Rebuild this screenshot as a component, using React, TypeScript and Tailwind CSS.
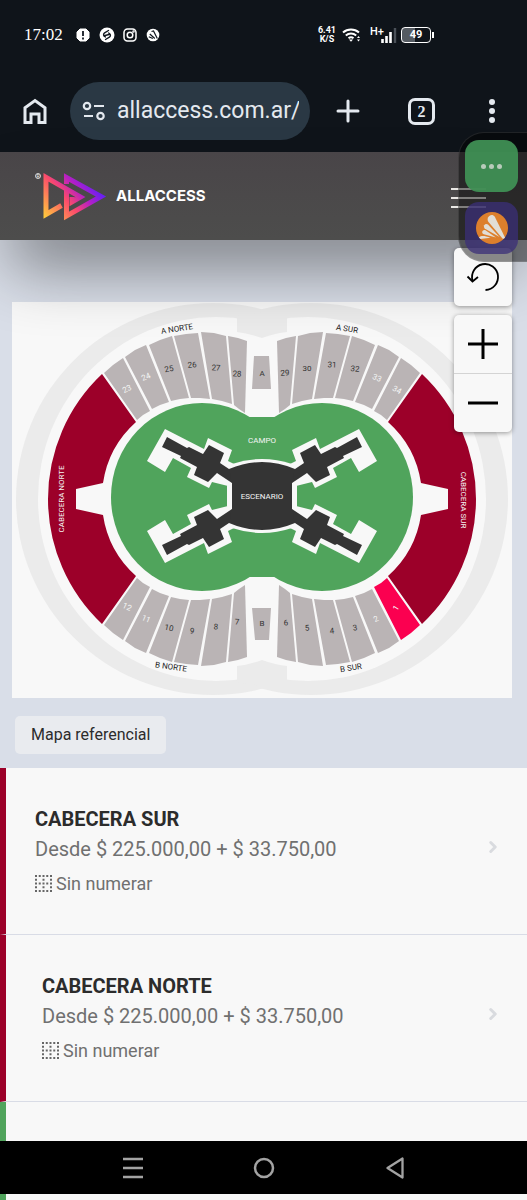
import { ChevronRight } from "lucide-react";

const blocks = [
  "104,373 113,365 123,358 150,411 143,415 137,420",
  "125,357 135,350 146,345 169,402 160,405 152,409",
  "149,345 160,340 172,336 189,398 180,399 171,401",
  "174,336 186,334 198,333 210,399 200,398 191,398",
  "201,332 214,333 226,336 232,404 222,401 212,399",
  "228,336 238,338 247,341 245,413 239,409 234,405",
];

const labels = [
  { text: "23", x: 127, y: 389, r: -25, light: true },
  { text: "24", x: 146, y: 377, r: -22, light: true },
  { text: "25", x: 169, y: 369, r: -10 },
  { text: "26", x: 192, y: 365, r: -3 },
  { text: "27", x: 216, y: 368, r: 3 },
  { text: "28", x: 237, y: 374, r: 3 },
  { text: "A", x: 262, y: 373, r: 0 },
  { text: "29", x: 285, y: 373, r: -2 },
  { text: "30", x: 307, y: 368, r: 0 },
  { text: "31", x: 332, y: 365, r: 2 },
  { text: "32", x: 355, y: 369, r: 6 },
  { text: "33", x: 377, y: 378, r: 24, light: true },
  { text: "34", x: 397, y: 390, r: 28, light: true },
  { text: "12", x: 127, y: 607, r: 26, light: true },
  { text: "11", x: 146, y: 619, r: 22, light: true },
  { text: "10", x: 169, y: 628, r: 12 },
  { text: "9", x: 192, y: 631, r: 8 },
  { text: "8", x: 216, y: 627, r: 4 },
  { text: "7", x: 237, y: 622, r: 2 },
  { text: "B", x: 262, y: 623, r: 0 },
  { text: "6", x: 286, y: 623, r: -2 },
  { text: "5", x: 307, y: 628, r: -4 },
  { text: "4", x: 332, y: 631, r: -6 },
  { text: "3", x: 355, y: 628, r: -10 },
  { text: "2", x: 376, y: 619, r: -24, light: true },
  { text: "1", x: 396, y: 608, r: -58, light: true },
];

const mirrorX = "translate(524 0) scale(-1 1)";
const mirrorY = "translate(0 998) scale(1 -1)";
const mirrorXY = "translate(524 998) scale(-1 -1)";
const stageMirrors = [
  undefined,
  mirrorX,
  "translate(0 992) scale(1 -1)",
  "translate(524 992) scale(-1 -1)",
];

const StatusBar = () => (
  <div className="flex h-[70px] items-center justify-between pr-[93px] pl-6 text-white">
    <div className="flex items-center gap-2">
      <span className="mr-1 font-['Liberation_Serif',serif] text-[17px] font-medium">17:02</span>
      <svg width="16" height="16" viewBox="0 0 16 16">
        <path d="M5 2h6l3 3v6l-3 3H5l-3-3V5z" fill="#fff" stroke="#fff" strokeLinejoin="round" />
        <path d="M8 4v5M8 10.500v2" stroke="#111820" strokeWidth="1.800" />
      </svg>
      <svg width="16" height="16" viewBox="0 0 16 16">
        <circle cx="8" cy="8" r="7.500" fill="#fff" />
        <path
          d="M9.500 3.500 5.600 5.800a2.200 2.200 0 0 0 0 3.700l.9.500M6.500 12.500l3.900-2.300a2.200 2.200 0 0 0 0-3.700L9.500 6M6 8.500l4-1"
          fill="none"
          stroke="#111820"
          strokeWidth="1.400"
          strokeLinecap="round"
        />
      </svg>
      <svg width="14" height="14" viewBox="0 0 14 14" fill="none" stroke="#fff" strokeWidth="1.500">
        <rect x="1" y="1" width="12" height="12" rx="3.500" />
        <circle cx="7" cy="7" r="2.800" />
        <circle cx="10.500" cy="3.500" r=".5" />
      </svg>
      <svg width="14" height="14" viewBox="0 0 14 14" className="ml-[1px]">
        <circle cx="7" cy="7" r="6.300" fill="#fff" />
        <path d="M5.500 3.500 7.500 3l3.800 7.500M3.800 6l5 4.500M2.800 8.700l4 1.800" stroke="#111820" strokeWidth="1.200" fill="none" />
      </svg>
    </div>

    <div className="flex items-center font-[Roboto,sans-serif]">
      <div className="text-center text-[9px] leading-[9px] font-bold">
        6.41
        <br />
        K/S
      </div>
      <svg width="20" height="16" viewBox="0 0 20 16" fill="none" stroke="#fff" strokeWidth="2" className="ml-[6px]">
        <path d="M1 5.500a12 12 0 0 1 16 0M3.800 8.500a8 8 0 0 1 10.400 0M6.500 11.300a4 4 0 0 1 5 0" />
        <path d="m7 12.500 2 2.300 2-2.300z" fill="#fff" stroke="none" />
        <path d="m15 11 1.500-2L18 11zM15 12.500l1.500 2 1.500-2z" fill="#fff" stroke="none" />
      </svg>
      <svg width="28" height="20" viewBox="0 0 28 20" className="ml-[8px]">
        <text x="0" y="10" fontSize="11" fontWeight="500" fill="#fff">H+</text>
        <path d="M12.500 18v-4M16.500 18v-7M20.500 18V7" stroke="#fff" strokeWidth="2.600" />
        <path d="M25 18V3" stroke="#4a5058" strokeWidth="2.400" />
      </svg>
      <div className="ml-[3px] flex h-4 w-[30px] items-center justify-center rounded-[4px] border border-white bg-[linear-gradient(90deg,#555b62_48%,transparent_48%)] text-[11px] font-bold">
        49
      </div>
      <div className="ml-px h-[6px] w-[2px] bg-white" />
    </div>
  </div>
);

const BrowserBar = () => (
  <div className="flex h-[82px] items-start pr-7 pl-[21px] text-[#e4e9ef]">
    <button aria-label="Inicio" className="mt-[26px]">
      <svg width="28" height="30" viewBox="0 0 28 30" fill="none" stroke="currentColor" strokeWidth="3">
        <path d="M4 26.500V11.800L14 4.500l10 7.300v14.700h-6V18h-8v8.500z" />
      </svg>
    </button>
    <div className="mt-3 ml-[21px] flex h-[58px] min-w-0 flex-1 items-center rounded-full bg-[#2a3844] pr-[11px] pl-3">
      <svg width="24" height="22" viewBox="0 0 24 22" fill="none" stroke="currentColor" strokeWidth="2.200" className="shrink-0">
        <circle cx="5" cy="6" r="3.200" />
        <path d="M12 6h10M2 16h9" />
        <circle cx="18.500" cy="16" r="3.200" />
      </svg>
      <input
        aria-label="Dirección"
        readOnly
        defaultValue="allaccess.com.ar/"
        className="ml-[11px] w-full min-w-0 flex-1 bg-transparent font-[Roboto,sans-serif] text-[23px] outline-none"
      />
    </div>
    <button aria-label="Nueva pestaña" className="mt-[29px] ml-[26px]">
      <svg width="24" height="24" viewBox="0 0 24 24" stroke="currentColor" strokeWidth="3" strokeLinecap="round">
        <path d="M12 2v20M2 12h20" />
      </svg>
    </button>
    <button
      aria-label="Pestañas abiertas"
      className="mt-[28px] ml-[48px] flex h-[27px] w-[27px] items-center justify-center rounded-[7px] border-[3px] border-current font-['Liberation_Serif',serif] text-base leading-none font-bold"
    >
      2
    </button>
    <button aria-label="Más opciones" className="mt-[28px] ml-[50px] flex w-[14px] flex-col items-center gap-[3px] py-px">
      <span className="h-[6px] w-[6px] rounded-full bg-current" />
      <span className="h-[6px] w-[6px] rounded-full bg-current" />
      <span className="h-[6px] w-[6px] rounded-full bg-current" />
    </button>
  </div>
);

const Logo = () => (
  <a href="#" className="flex items-center gap-2 text-white">
    <svg width="74" height="52" viewBox="34 170 74 52" fill="none" strokeWidth="5">
      <defs>
        <linearGradient id="brand" gradientUnits="userSpaceOnUse" x1="45" y1="217" x2="95" y2="175">
          <stop offset="0" stopColor="#ffc83c" />
          <stop offset=".42" stopColor="#fb4a6c" />
          <stop offset=".66" stopColor="#b61fc4" />
          <stop offset=".95" stopColor="#551fff" />
        </linearGradient>
      </defs>
      <circle cx="38" cy="176" r="2.500" stroke="#d8d8d8" strokeWidth="1" />
      <text x="38" y="178" fontSize="5" textAnchor="middle" fill="#e8e8e8">R</text>
      <path d="M66.500 184v-6.500l34.500 19-34.500 19.500V190" stroke="url(#brand)" />
      <path d="M61.500 205.500l-15.500 9v-37.200L80.500 197 72 202v-5" stroke="url(#brand)" />
    </svg>
    <span className="font-[Inter,sans-serif] text-[15px] font-bold">ALLACCESS</span>
  </a>
);

const Header = () => (
  <header className="relative z-10 flex h-[88px] items-center justify-between bg-linear-to-b from-[#494548] to-[#4d4d4c] pr-[41px] pl-[34px] shadow-[0_36px_64px_-10px_rgba(0,0,0,.45)]">
    <Logo />
    <button aria-label="Menú" className="mt-[4px] flex w-[35px] flex-col gap-[7px]">
      <span className="h-[2px] bg-[#e9e7e4]" />
      <span className="h-[2px] bg-[#e9e7e4]" />
      <span className="h-[2px] bg-[#e9e7e4]" />
    </button>
  </header>
);

const Quarter = ({ selected }: { selected?: boolean }) => (
  <>
    <path
      d="M102,374 A172,172 0 0 0 48,499 H76 V489 L103,483 A102,102 0 0 1 136,422 Z"
      fill="#9c0029"
    />
    {blocks.map((points, i) => (
      <polygon key={points} points={points} fill={selected && i === 0 ? "#fb0050" : "#bab4b5"} />
    ))}
  </>
);

const VenueMap = () => (
  <svg viewBox="12 302 500 396" className="block w-full bg-[#f8f8f8] font-[Roboto,sans-serif]" role="img" aria-label="Mapa del recinto">
    {/* outer ring */}
    <g fill="#ebebeb">
      <ellipse cx="213" cy="499" rx="197" ry="196" />
      <ellipse cx="311" cy="499" rx="197" ry="196" />
    </g>
    <g fill="#f8f8f8">
      <ellipse cx="216" cy="499" rx="178" ry="182" />
      <ellipse cx="308" cy="499" rx="178" ry="182" />
    </g>
    <path d="M237,316 L262,312 L287,316 V332 Q276,333 262,338 Q248,333 237,332 Z" fill="#ebebeb" />
    <path d="M237,682 L262,686 L287,682 V666 Q276,665 262,660 Q248,665 237,666 Z" fill="#ebebeb" />

    <g><Quarter /></g>
    <g transform={mirrorX}><Quarter /></g>
    <g transform={mirrorY}><Quarter /></g>
    <g transform={mirrorXY}><Quarter selected /></g>
    <polygon points="254,356 269,356 271,389 252,389" fill="#bab4b5" />
    <polygon points="252,608 271,608 269,640 255,640" fill="#bab4b5" />

    {/* field */}
    <g fill="#50a45c">
      <ellipse cx="202" cy="497" rx="91" ry="94" />
      <ellipse cx="322" cy="497" rx="91" ry="94" />
      <rect x="202" y="417" width="120" height="160" />
    </g>

    {/* stage */}
    {stageMirrors.map((transform, i) => (
      <polygon
        key={i}
        transform={transform}
        points="165,429 204,449 208,438 232,450 228,461 236,465 240,490 228,486 212,482 209,488 187,477 191,468 173,458 165,472 147,461"
        fill="#f8f8f8"
      />
    ))}
    <path d="M232,464 Q262,454 292,464 L297,486 V506 L292,528 Q262,538 232,528 L227,506 V486 Z" fill="#f8f8f8" />
    {stageMirrors.map((transform, i) => (
      <polygon
        key={i}
        transform={transform}
        points="167,437 187,448 189,447 203,454 209,445 224,453 220,463 229,469 240,475 240,488 232,483 217,473 208,482 194,475 197,467 180,458 181,456 162,447"
        fill="#343434"
      />
    ))}
    <path d="M229,469 Q262,455 295,469 L292,483 V509 L295,523 Q262,537 229,523 L232,509 V483 Z" fill="#343434" />

    <g fontSize="8" textAnchor="middle" dominantBaseline="central">
      {labels.map(({ text, x, y, r, light }) => (
        <text key={text} x={x} y={y} transform={`rotate(${r} ${x} ${y})`} fill={light ? "#f4f4f4" : "#333"}>
          {text}
        </text>
      ))}
      <g fill="#f4f4f4">
        <text x="262" y="440">CAMPO</text>
        <text x="262" y="496">ESCENARIO</text>
        <text x="61" y="499" transform="rotate(-90 61 499)">CABECERA NORTE</text>
        <text x="463" y="500" transform="rotate(90 463 500)">CABECERA SUR</text>
      </g>
      <g fill="#222">
        <text x="177" y="329" transform="rotate(-9 177 329)">A NORTE</text>
        <text x="347" y="329" transform="rotate(9 347 329)">A SUR</text>
        <text x="171" y="667" transform="rotate(8 171 667)">B NORTE</text>
        <text x="351" y="668" transform="rotate(-9 351 668)">B SUR</text>
      </g>
    </g>
  </svg>
);

const MapControls = () => (
  <div className="absolute top-2 right-[15px] z-10 flex w-[58px] flex-col gap-[9px]">
    <button aria-label="Restablecer" className="flex h-[58px] items-center justify-center rounded-[5px] bg-[#f8f8f8] shadow-[0_1px_5px_rgba(0,0,0,.4)]">
      <svg width="34" height="30" viewBox="0 0 34 30" fill="none" stroke="#000" strokeWidth="1.800">
        <path d="M6.500 18.500a13 13 0 1 1 13 9.500" />
        <path d="m1.500 14.500 5 5 5.500-4.500" />
      </svg>
    </button>
    <div className="flex flex-col overflow-hidden rounded-[5px] bg-[#f8f8f8] shadow-[0_1px_5px_rgba(0,0,0,.4)]">
      <button aria-label="Acercar" className="flex h-[59px] items-center justify-center border-b border-[#d4d4d4]">
        <svg width="30" height="30" viewBox="0 0 30 30" stroke="#000" strokeWidth="3">
          <path d="M15 0v30M0 15h30" />
        </svg>
      </button>
      <button aria-label="Alejar" className="flex h-[58px] items-center justify-center">
        <svg width="30" height="30" viewBox="0 0 30 30" stroke="#000" strokeWidth="3">
          <path d="M0 15h30" />
        </svg>
      </button>
    </div>
  </div>
);

const SidePanel = () => (
  <div className="absolute top-[132px] right-0 z-20 flex h-[130px] w-[69px] flex-col gap-[10px] rounded-l-[26px] border border-r-0 border-white/10 bg-black/45 pt-[7px] pl-[6px]">
    <button aria-label="Mensajes" className="flex h-[52px] w-[53px] items-center justify-center gap-[3px] rounded-[14px] bg-[#3f8f54]/95">
      <span className="h-[5px] w-[5px] rounded-full bg-[#b9cbbb]" />
      <span className="h-[5px] w-[5px] rounded-full bg-[#b9cbbb]" />
      <span className="h-[5px] w-[5px] rounded-full bg-[#b9cbbb]" />
    </button>
    <button aria-label="Antivirus" className="flex h-[52px] w-[53px] items-center justify-center rounded-[14px] bg-[#3b2f78]/75">
      <svg width="32" height="32" viewBox="0 0 32 32">
        <circle cx="16" cy="16" r="16" fill="#dd7f2c" />
        <g fill="#e2ded6">
          <path d="M12 5.500c1.500-3 5-3.500 6.800-.8L29 25.500c-1 1.200-1.500 1.500-2.500 1L12.500 10c-1-1.400-1.200-3-.5-4.500z" />
          <path d="M8.200 13.200c1-1.500 2.800-1.500 4-.4L23.500 25l-14-8c-1.500-1-2-2.500-1.300-3.800z" />
          <path d="M6.500 19c.8-1 2-1.200 3-.7L20 25.500 7.800 22.200C6.300 21.700 5.800 20.300 6.500 19z" />
          <path d="M3 25.500c2-1.800 5-2 11.500.2l-10 1.300z" />
        </g>
      </svg>
    </button>
  </div>
);

const SeatsIcon = () => (
  <svg width="17" height="17" viewBox="0 0 17 17" fill="none" stroke="#666" strokeWidth="2" strokeDasharray="2 1.750">
    <path d="M0 1h17M0 8.500h17M0 16h17M1 0v17M8.500 0v17M16 0v17" />
  </svg>
);

type Sector = { name: string; price: string; pad: string };

const sectors: Sector[] = [
  { name: "CABECERA SUR", price: "Desde $ 225.000,00 + $ 33.750,00", pad: "pl-[29px]" },
  { name: "CABECERA NORTE", price: "Desde $ 225.000,00 + $ 33.750,00", pad: "pl-9" },
];

const SectorRow = ({ name, price, pad }: Sector) => (
  <li className="h-[167px] border-b border-l-[6px] border-b-[#d9dce6] border-l-[#9c0029]">
    <a href="#" className={`flex h-full items-center justify-between pr-[25px] ${pad}`}>
      <div>
        <h2 className="text-xl leading-7 font-bold text-[#2c2c2c]">{name}</h2>
        <p className="text-xl leading-8 text-[#707070]">{price}</p>
        <p className="mt-[5px] flex items-center gap-1 text-lg leading-7 text-[#707070]">
          <SeatsIcon />
          Sin numerar
        </p>
      </div>
      <ChevronRight size={18} strokeWidth={4} className="mb-2 text-[#d9dbdf]" />
    </a>
  </li>
);

const NavBar = () => (
  <nav className="fixed inset-x-0 bottom-[6px] z-30 flex h-[53px] items-center justify-center bg-black text-[#a3a3a3]">
    <button aria-label="Recientes" className="flex w-[131px] justify-center">
      <svg width="20" height="22" viewBox="0 0 20 22" stroke="currentColor" strokeWidth="2.500">
        <path d="M0 2h20M0 11h20M0 20h20" />
      </svg>
    </button>
    <button aria-label="Pantalla de inicio" className="flex w-[131px] justify-center">
      <svg width="22" height="22" viewBox="0 0 22 22" fill="none" stroke="currentColor" strokeWidth="2.500">
        <circle cx="11" cy="11" r="9" />
      </svg>
    </button>
    <button aria-label="Atrás" className="flex w-[131px] justify-center">
      <svg width="20" height="22" viewBox="0 0 20 22" fill="none" stroke="currentColor" strokeWidth="2.300" strokeLinejoin="round">
        <path d="M17.500 1.500v19L2.500 11z" />
      </svg>
    </button>
  </nav>
);

export default function App() {
  return (
    <div className="relative flex min-h-screen flex-col bg-[#f8f8f8] font-[Roboto,sans-serif]">
      <div className="bg-[#0f141a]">
        <StatusBar />
        <BrowserBar />
      </div>
      <Header />
      <SidePanel />

      <section className="relative bg-[#d9dee8] pt-[62px] pr-[15px] pb-[14px] pl-3">
        <VenueMap />
        <MapControls />
        <button className="mt-[18px] ml-[3px] block h-[38px] rounded-[5px] bg-[#e9ebef] px-4 text-base text-[#2c2c2c]">
          Mapa referencial
        </button>
      </section>

      <ul className="flex flex-1 flex-col">
        {sectors.map((sector) => (
          <SectorRow key={sector.name} {...sector} />
        ))}
        <li className="flex-1 border-l-[6px] border-l-[#50a45c]" />
      </ul>
      <NavBar />
    </div>
  );
}
